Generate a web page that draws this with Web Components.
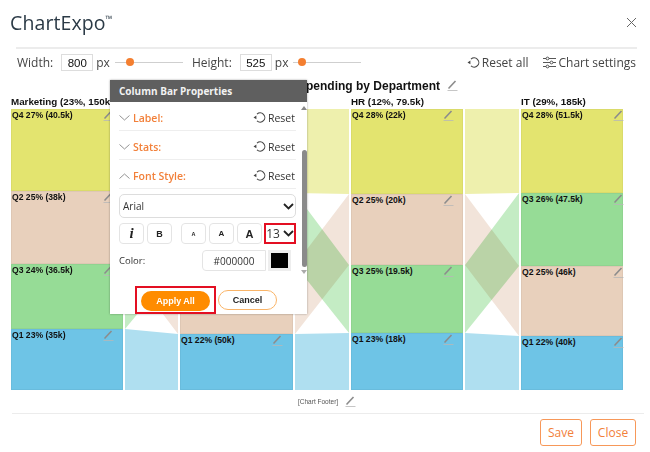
<!DOCTYPE html>
<html>
<head>
<meta charset="utf-8">
<title>ChartExpo</title>
<style>
    html, body { margin: 0; padding: 0; background: #fff; }
    body { width: 650px; height: 452px; overflow: hidden; font-family: "Open Sans", "Liberation Sans", sans-serif; }
</style>
</head>
<body>

<chart-dialog>
    <size-control slot="toolbar" label="Width:" value="800" thumb="15" gap="8"></size-control>
    <size-control slot="toolbar" label="Height:" value="525" thumb="9" gap="8"></size-control>

    <chart-column slot="plot" heading="Marketing (23%, 150k)" width="112">
        <chart-segment color="#e3e46f" size="82" label="Q4 27% (40.5k)"></chart-segment>
        <chart-segment color="#e8d0bc" size="73" label="Q2 25% (38k)"></chart-segment>
        <chart-segment color="#96dc96" size="65" label="Q3 24% (36.5k)"></chart-segment>
        <chart-segment color="#6ec4e6" size="61" label="Q1 23% (35k)"></chart-segment>
    </chart-column>
    <chart-link slot="plot" width="53" bands="yellow:0,82,0,83 tan:82,155,156,225 green:155,220,84,156 blue:220,281,225,281"></chart-link>
    <chart-column slot="plot" width="113">
        <chart-segment color="#e3e46f" size="83"></chart-segment>
        <chart-segment color="#96dc96" size="73"></chart-segment>
        <chart-segment color="#e8d0bc" size="69"></chart-segment>
        <chart-segment color="#6ec4e6" size="56" label="Q1 22% (50k)"></chart-segment>
    </chart-column>
    <chart-link slot="plot" width="54" bands="yellow:0,84,0,85 tan:156,225,85,156 green:84,156,156,224 blue:225,281,224,281"></chart-link>
    <chart-column slot="plot" heading="HR (12%, 79.5k)" width="112">
        <chart-segment color="#e3e46f" size="85" label="Q4 28% (22k)"></chart-segment>
        <chart-segment color="#e8d0bc" size="71" label="Q2 25% (20k)"></chart-segment>
        <chart-segment color="#96dc96" size="68" label="Q3 25% (19.5k)"></chart-segment>
        <chart-segment color="#6ec4e6" size="57" label="Q1 23% (18k)"></chart-segment>
    </chart-column>
    <chart-link slot="plot" width="54" bands="yellow:0,85,0,84 tan:85,156,157,227 green:156,224,84,157 blue:224,281,227,281"></chart-link>
    <chart-column slot="plot" heading="IT (29%, 185k)" width="102">
        <chart-segment color="#e3e46f" size="84" label="Q4 28% (51.5k)"></chart-segment>
        <chart-segment color="#96dc96" size="73" label="Q3 26% (47.5k)"></chart-segment>
        <chart-segment color="#e8d0bc" size="70" label="Q2 25% (46k)"></chart-segment>
        <chart-segment color="#6ec4e6" size="54" label="Q1 22% (40k)"></chart-segment>
    </chart-column>

    <props-panel slot="panel"></props-panel>
</chart-dialog>

<script>
const pencilIcon = `
    <svg width="11" height="11" viewBox="0 0 11 11" fill="none">
        <path d="M1.5 8.5 L8.5 1" stroke="#8c8c8c" stroke-width="1.6"/>
        <path d="M0.5 10.5 H10.5" stroke="#b8b8b8" stroke-width="0.8"/>
    </svg>`;

const resetIcon = `
    <svg width="13" height="13" viewBox="0 0 13 13" fill="none">
        <path d="M3 3.2 A4.6 4.6 0 1 1 3 9.8" stroke="#444" stroke-width="1.1" transform="translate(1 0)"/>
        <path d="M0.5 6.4 L3.4 4.6 V8.2 Z" fill="#444"/>
    </svg>`;

const chevronDown = `
    <svg width="11" height="7" viewBox="0 0 11 7" fill="none">
        <path d="M1 1 L5.5 5.5 L10 1" stroke="#222" stroke-width="1.8"/>
    </svg>`;

class ChartDialog extends HTMLElement {

    constructor() {
        super();
        this.shadow = this.attachShadow({ mode: 'open' });
    }

    connectedCallback() {
        this.render();
    }

    render() {
        this.shadow.innerHTML =
        `
        <style>
            :host {
                color: #333;
                display: flex;
                flex-direction: column;
                font-family: "Open Sans", "Liberation Sans", sans-serif;
                height: 452px;
                position: relative;
                width: 650px;
            }

            header {
                align-items: center;
                box-sizing: border-box;
                display: flex;
                height: 47px;
                justify-content: space-between;
                padding: 0 13px 3px 10px;
            }

            .logo {
                color: #2b3a46;
                font-size: 19.5px;
                letter-spacing: 0.1px;
            }

            .logo sup {
                font-size: 9px;
                line-height: 0;
                vertical-align: 8px;
            }

            .rule {
                background: #ececec;
                height: 1.5px;
                margin: 0 13px 0 16px;
            }

            .toolbar {
                align-items: center;
                box-sizing: border-box;
                display: flex;
                font-size: 12px;
                gap: 9px;
                height: 28px;
                padding: 0 14px 0 17px;
            }

            .actions {
                display: flex;
                gap: 15px;
                margin-left: auto;
            }

            .action {
                align-items: center;
                color: #444;
                display: flex;
                gap: 2px;
            }

            .title {
                align-items: center;
                display: flex;
                font-family: "Liberation Sans", Arial, sans-serif;
                font-size: 12px;
                font-weight: 700;
                gap: 7px;
                height: 18px;
                padding-left: 298px;
                color: #111;
            }

            .plot {
                align-items: flex-end;
                display: flex;
                gap: 2px;
                padding-left: 11px;
            }

            .chart-footer {
                align-items: center;
                color: #555;
                display: flex;
                font-family: "Liberation Sans", Arial, sans-serif;
                font-size: 6.5px;
                gap: 7px;
                height: 23px;
                padding-left: 298px;
            }

            .bottom-rule {
                background: #ececec;
                height: 1px;
                margin: 0 6px 0 12px;
            }

            .buttons {
                display: flex;
                gap: 8px;
                justify-content: flex-end;
                padding: 5px 14px 0 0;
            }

            .buttons button {
                background: #fff;
                border: 1px solid #f79859;
                border-radius: 3px;
                color: #f2803a;
                font-family: inherit;
                font-size: 12px;
                height: 27px;
                padding: 0;
            }
        </style>

        <header>
            <div class="logo">ChartExpo<sup>™</sup></div>
            <svg width="11" height="11" viewBox="0 0 11 11" fill="none">
                <path d="M1 1 L10 10 M10 1 L1 10" stroke="#666" stroke-width="1"/>
            </svg>
        </header>
        <div class="rule"></div>
        <div class="toolbar">
            <slot name="toolbar"></slot>
            <div class="actions">
                <div class="action">${resetIcon}<span>Reset all</span></div>
                <div class="action">
                    <svg width="13" height="13" viewBox="0 0 13 13" fill="none" stroke="#444" stroke-width="0.9">
                        <path d="M0 2.5 H3 M6 2.5 H13 M0 6.5 H7 M10 6.5 H13 M0 10.5 H3 M6 10.5 H13"/>
                        <circle cx="4.5" cy="2.5" r="1.4"/>
                        <circle cx="8.5" cy="6.5" r="1.4"/>
                        <circle cx="4.5" cy="10.5" r="1.4"/>
                    </svg>
                    <span>Chart settings</span>
                </div>
            </div>
        </div>
        <div class="title"><span>Spending by Department</span>${pencilIcon}</div>
        <div class="plot"><slot name="plot"></slot></div>
        <div class="chart-footer"><span>[Chart Footer]</span>${pencilIcon}</div>
        <div class="bottom-rule"></div>
        <div class="buttons">
            <button style="width: 42px">Save</button>
            <button style="width: 46px">Close</button>
        </div>
        <slot name="panel"></slot>
        `;
    }
}

class SizeControl extends HTMLElement {

    constructor() {
        super();
        this.shadow = this.attachShadow({ mode: 'open' });
    }

    connectedCallback() {
        this.render();
    }

    render() {
        const thumb = this.getAttribute('thumb');

        this.shadow.innerHTML =
        `
        <style>
            :host {
                align-items: center;
                color: #444;
                display: flex;
                font-size: 12px;
                margin-right: 0;
            }

            .box {
                border: 1px solid #ddd;
                box-sizing: border-box;
                color: #111;
                font-family: "Liberation Sans", Arial, sans-serif;
                font-size: 11.5px;
                font-weight: 400;
                height: 17px;
                line-height: 17px;
                margin: 0 3px 0 8px;
                text-align: center;
                width: 32px;
            }

            .track {
                background: #cfcfcf;
                height: 1px;
                margin-left: 5px;
                position: relative;
                width: 68px;
            }

            .thumb {
                background: #f47f30;
                border-radius: 50%;
                height: 8px;
                left: ${thumb - 4}px;
                position: absolute;
                top: -4px;
                width: 8px;
            }
        </style>

        <span>${this.getAttribute('label')}</span>
        <div class="box">${this.getAttribute('value')}</div>
        <span>px</span>
        <div class="track"><div class="thumb"></div></div>
        `;
    }
}

class ChartColumn extends HTMLElement {

    constructor() {
        super();
        this.shadow = this.attachShadow({ mode: 'open' });
    }

    connectedCallback() {
        this.render();
    }

    render() {
        this.shadow.innerHTML =
        `
        <style>
            :host {
                display: block;
                width: ${this.getAttribute('width')}px;
            }

            .heading {
                box-sizing: border-box;
                color: #111;
                font-family: "Liberation Sans", Arial, sans-serif;
                font-size: 9.8px;
                font-weight: 700;
                height: 14px;
                line-height: 14px;
                white-space: nowrap;
            }

            .bars {
                display: flex;
                flex-direction: column;
            }
        </style>

        <div class="heading">${this.getAttribute('heading') || ''}</div>
        <div class="bars"><slot></slot></div>
        `;
    }
}

class ChartSegment extends HTMLElement {

    constructor() {
        super();
        this.shadow = this.attachShadow({ mode: 'open' });
    }

    connectedCallback() {
        this.render();
    }

    render() {
        const label = this.getAttribute('label');

        this.shadow.innerHTML =
        `
        <style>
            :host {
                background: ${this.getAttribute('color')};
                box-shadow: inset 0 0 0 1px rgba(0, 0, 0, 0.04);
                box-sizing: border-box;
                color: #111;
                display: grid;
                font-family: "Liberation Sans", Arial, sans-serif;
                font-size: 8.6px;
                font-weight: 700;
                grid-template-columns: 91px 11px;
                height: ${this.getAttribute('size')}px;
                align-content: start;
                padding: 1px 0 0 1px;
            }

            span {
                line-height: 10px;
                white-space: nowrap;
            }
        </style>

        ${label ? `<span>${label}</span>${pencilIcon}` : ''}
        `;
    }
}

class ChartLink extends HTMLElement {

    constructor() {
        super();
        this.shadow = this.attachShadow({ mode: 'open' });
    }

    connectedCallback() {
        this.render();
    }

    render() {
        const width = this.getAttribute('width');
        const fills = { yellow: '#eef0ad', tan: '#f2e4da', green: '#c4ecc4', blue: '#afdff0' };

        const paths = this.getAttribute('bands').split(' ').map((band) => {
            const [name, coords] = band.split(':');
            const [a, b, c, d] = coords.split(',');
            return `<path d="M0 ${a} L${width} ${c} V${d} L0 ${b} Z" fill="${fills[name]}"/>`;
        }).join('');

        this.shadow.innerHTML =
        `
        <style>
            :host {
                display: block;
                height: 281px;
                width: ${width}px;
            }

            svg {
                display: block;
            }

            path {
                mix-blend-mode: multiply;
            }
        </style>

        <svg width="${width}" height="281" viewBox="0 0 ${width} 281">${paths}</svg>
        `;
    }
}

class PropsPanel extends HTMLElement {

    constructor() {
        super();
        this.shadow = this.attachShadow({ mode: 'open' });
    }

    connectedCallback() {
        this.render();
    }

    section(name, open) {
        return `
        <div class="section">
            <svg width="11" height="6" viewBox="0 0 11 6" fill="none">
                <path d="${open ? 'M0.5 5.5 L5.5 1 L10.5 5.5' : 'M0.5 0.5 L5.5 5 L10.5 0.5'}" stroke="#888" stroke-width="0.9"/>
            </svg>
            <b>${name}</b>
            <div class="reset">${resetIcon}<span>Reset</span></div>
        </div>`;
    }

    render() {
        this.shadow.innerHTML =
        `
        <style>
            :host {
                background: #fff;
                box-shadow: 0 0 2px rgba(0, 0, 0, 0.35);
                color: #333;
                display: flex;
                flex-direction: column;
                font-family: "Open Sans", "Liberation Sans", sans-serif;
                height: 234px;
                left: 110px;
                position: absolute;
                top: 80px;
                width: 197px;
            }

            .head {
                background: #5f5f5f;
                color: #f2f2f2;
                font-size: 10px;
                font-weight: 700;
                height: 22px;
                line-height: 23px;
                padding-left: 9px;
            }

            .body {
                display: flex;
                flex: 1;
            }

            .content {
                box-sizing: border-box;
                padding: 0 5px 0 9px;
                width: 191px;
            }

            .section {
                align-items: center;
                border-bottom: 1px solid #eee;
                box-sizing: border-box;
                display: flex;
                gap: 3px;
                height: 29px;
                padding-top: 3px;
            }

            .section b {
                color: #f2803a;
                font-size: 10.5px;
                font-weight: 600;
            }

            .reset {
                align-items: center;
                color: #333;
                display: flex;
                font-size: 10.5px;
                gap: 2px;
                margin-left: auto;
                padding-right: 1px;
            }

            .font-select {
                align-items: center;
                border: 1px solid #ddd;
                border-radius: 5px;
                box-sizing: border-box;
                display: flex;
                font-size: 10px;
                height: 24px;
                justify-content: space-between;
                margin-top: 5px;
                padding: 0 1px 0 3px;
                width: 177px;
            }

            .tools {
                align-items: center;
                display: flex;
                margin-top: 5px;
            }

            .tool {
                align-items: center;
                border: 1px solid #e4e4e4;
                border-radius: 4px;
                box-sizing: border-box;
                color: #222;
                display: flex;
                font-family: "Liberation Sans", Arial, sans-serif;
                font-weight: 700;
                height: 21px;
                justify-content: center;
                margin-right: 3px;
                width: 25px;
            }

            .size {
                align-items: center;
                border: 2px solid #e30f22;
                box-sizing: border-box;
                display: flex;
                font-size: 12px;
                gap: 3px;
                height: 21px;
                justify-content: center;
                width: 32px;
            }

            .color-row {
                align-items: center;
                display: flex;
                font-size: 9.5px;
                margin-top: 6px;
            }

            .color-value {
                border: 1px solid #e4e4e4;
                border-radius: 4px 0 0 4px;
                box-sizing: border-box;
                font-size: 10px;
                height: 21px;
                line-height: 21px;
                margin-left: auto;
                text-align: center;
                width: 64px;
            }

            .swatch {
                background: #000;
                border: 3px solid #eee;
                box-sizing: border-box;
                height: 21px;
                margin: 0 5px 0 2px;
                width: 23px;
            }

            .scrollbar {
                align-items: center;
                display: flex;
                flex-direction: column;
                height: 178px;
                width: 6px;
            }

            .arrow {
                border-left: 3px solid transparent;
                border-right: 3px solid transparent;
                height: 0;
                width: 0;
            }

            .thumb {
                background: #8a8a8a;
                border-radius: 3px;
                height: 117px;
                margin: 40px 0 3px;
                width: 5px;
            }

            .foot {
                display: flex;
                margin-top: -8px;
                padding: 0 0 0 25px;
                gap: 2px;
                align-items: center;
            }

            .apply-frame {
                border: 2px solid #e30f22;
                box-sizing: border-box;
                padding: 3px 4px;
                height: 28px;
            }

            .apply, .cancel {
                border-radius: 10px;
                box-sizing: border-box;
                font-family: "Liberation Sans", Arial, sans-serif;
                font-size: 9px;
                font-weight: 700;
                height: 20px;
                line-height: 18px;
                text-align: center;
            }

            .apply {
                background: #ff8c00;
                color: #fff;
                line-height: 20px;
                width: 69px;
            }

            .cancel {
                background: #fff;
                border: 1px solid #f9b468;
                color: #222;
                width: 59px;
            }
        </style>

        <div class="head">Column Bar Properties</div>
        <div class="body">
            <div class="content">
                ${this.section('Label:')}
                ${this.section('Stats:')}
                ${this.section('Font Style:', true)}
                <div class="font-select"><span>Arial</span>${chevronDown}</div>
                <div class="tools">
                    <div class="tool" style="font-family: 'Liberation Serif', serif; font-size: 15px; font-style: italic">i</div>
                    <div class="tool" style="font-size: 9px; margin-right: 9px">B</div>
                    <div class="tool" style="font-size: 5.5px">A</div>
                    <div class="tool" style="font-size: 8px">A</div>
                    <div class="tool" style="font-size: 11px; margin-right: 2px">A</div>
                    <div class="size"><span>13</span>${chevronDown}</div>
                </div>
                <div class="color-row">
                    <span>Color:</span>
                    <div class="color-value">#000000</div>
                    <div class="swatch"></div>
                </div>
            </div>
            <div class="scrollbar">
                <div class="arrow" style="border-bottom: 4px solid #888; margin-top: 4px"></div>
                <div class="thumb"></div>
                <div class="arrow" style="border-top: 4px solid #aaa"></div>
            </div>
        </div>
        <div class="foot">
            <div class="apply-frame"><div class="apply">Apply All</div></div>
            <div class="cancel">Cancel</div>
        </div>
        `;
    }
}

customElements.define('chart-dialog', ChartDialog);
customElements.define('size-control', SizeControl);
customElements.define('chart-column', ChartColumn);
customElements.define('chart-segment', ChartSegment);
customElements.define('chart-link', ChartLink);
customElements.define('props-panel', PropsPanel);
</script>

</body>
</html>
